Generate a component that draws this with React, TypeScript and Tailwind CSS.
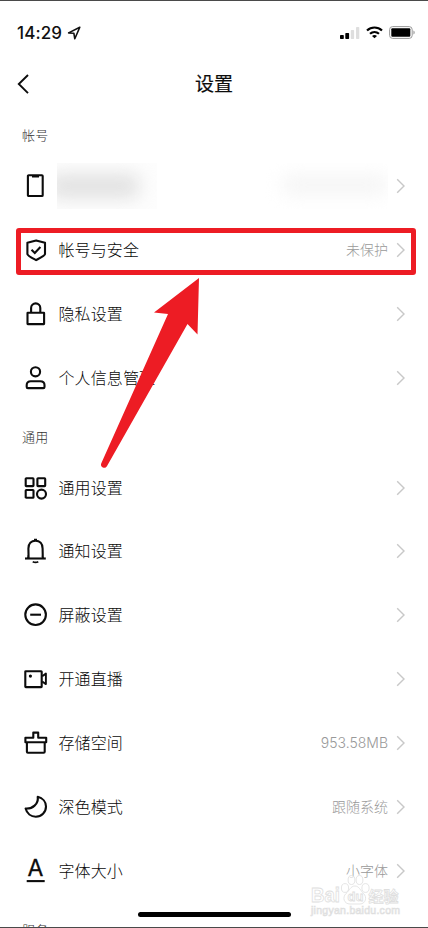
import type { ReactNode } from 'react';

type Row = {
  icon: ReactNode;
  label?: string;
  value?: string;
};

function Icon({ children }: { children: ReactNode }) {
  return (
    <svg
      className="h-6 w-6 shrink-0 overflow-visible"
      viewBox="0 0 24 24"
      fill="none"
      stroke="#0c0c0c"
      strokeWidth="2.1"
      strokeLinejoin="round"
    >
      {children}
    </svg>
  );
}

const accountRows: Row[] = [
  {
    icon: (
      <Icon>
        <rect x="3.9" y="1.3" width="14.8" height="20.7" rx="0.8" />
        <path d="M8 2.4h7" strokeWidth="2.2" />
      </Icon>
    ),
  },
  {
    icon: (
      <Icon>
        <path d="M12.100 2.400 21 4.800v11.100c0 1.900-5.500 4.400-8.900 6.200-3.400-1.800-8.700-4.300-8.700-6.200V4.800z" />
        <path d="m7.500 11.700 3.300 3.200 5.600-5.800" strokeLinejoin="miter" />
      </Icon>
    ),
    label: '帐号与安全',
    value: '未保护',
  },
  {
    icon: (
      <Icon>
        <rect x="3.5" y="10.7" width="16.6" height="11.4" rx="0.3" />
        <path d="M7.100 10.500V6a4.600 4.600 0 0 1 9.200 0v4.500" />
      </Icon>
    ),
    label: '隐私设置',
  },
  {
    icon: (
      <Icon>
        <circle cx="11.5" cy="5.8" r="4.6" />
        <path d="M6.800 15.200h9.400c2.600 0 4.300 1.500 4.300 3.700v2c0 .7-.5 1.200-1.200 1.200H3.900c-.7 0-1.200-.5-1.200-1.200v-2c0-2.200 1.500-3.700 4.100-3.700z" />
      </Icon>
    ),
    label: '个人信息管理',
  },
];

const generalRows: Row[] = [
  {
    icon: (
      <Icon>
        <rect x="1.7" y="2.3" width="7.8" height="7.8" rx="0.6" />
        <rect x="13.4" y="2.3" width="7.8" height="7.8" rx="0.6" />
        <rect x="1.7" y="14" width="7.8" height="7.8" rx="0.6" />
        <circle cx="17.5" cy="18.1" r="4.5" />
      </Icon>
    ),
    label: '通用设置',
  },
  {
    icon: (
      <Icon>
        <path d="M1 19.500h20.800" />
        <path d="M4.600 19.300 4.400 9.400c0-4.600 2.900-7.700 7.100-7.700s7.100 3.100 7.100 7.700l.2 9.900M4 19.500l.5-3M19 19.500l-.5-3" />
        <path d="M10 .6h3M8.700 22.800c1.500.7 4.100.7 5.600 0" strokeWidth="1.7" />
      </Icon>
    ),
    label: '通知设置',
  },
  {
    icon: (
      <Icon>
        <circle cx="11.6" cy="11.7" r="10.3" />
        <path d="M6.200 11.700h10.800" />
      </Icon>
    ),
    label: '屏蔽设置',
  },
  {
    icon: (
      <Icon>
        <rect x="1.3" y="4.2" width="16.4" height="15.9" rx="0.5" />
        <path d="m18.200 9.200 3.700-2.600v10.500l-3.700-2.600" strokeWidth="1.9" />
        <circle cx="6.4" cy="9.1" r="1.6" fill="#0c0c0c" stroke="none" />
      </Icon>
    ),
    label: '开通直播',
  },
  {
    icon: (
      <Icon>
        <path d="M9.300 6.800V1.600h4.900v5.200h8v4.500H1.400V6.800z" />
        <path d="M2.900 11.500v9.300c0 .6.4 1 1 1h15.800c.6 0 1-.4 1-1v-9.300" />
      </Icon>
    ),
    label: '存储空间',
    value: '953.58MB',
  },
  {
    icon: (
      <Icon>
        <path d="M13.700 1.800C18.700 3 22 7 22 11.500c0 5.700-4.500 10.200-10.200 10.200-4.800 0-8.900-3.200-10.200-8.200 6.700.6 13.200-4.400 12.100-11.700z" />
      </Icon>
    ),
    label: '深色模式',
    value: '跟随系统',
  },
  {
    icon: (
      <Icon>
        <text
          x="11.5"
          y="17"
          textAnchor="middle"
          fontFamily="Inter, sans-serif"
          fontSize="23"
          fontWeight="400"
          fill="#0c0c0c"
          stroke="#0c0c0c"
          strokeWidth="0.3"
        >
          A
        </text>
        <path d="M2.700 22.100h18" />
      </Icon>
    ),
    label: '字体大小',
    value: '小字体',
  },
];

function Chevron() {
  return (
    <svg className="h-4 w-2.5 shrink-0" viewBox="0 0 10 16" fill="none" stroke="#c8c8c8" strokeWidth="1.4">
      <path d="m1.200 1.300 6.800 6.700-6.800 6.700" />
    </svg>
  );
}

function SettingRow({ icon, label, value }: Row) {
  return (
    <li className="flex h-[63.9px] items-center pr-[22px] pl-6">
      {icon}
      {label ? (
        <span className="ml-[10.5px] pt-0.5 text-[16px] leading-6 font-light tracking-[0.1px] whitespace-nowrap text-[#080808]">
          {label}
        </span>
      ) : (
        <span className="ml-[9px] h-[46px] w-[100px] overflow-hidden bg-[#fdfdfd]">
          <span className="mt-[11px] -ml-2 block h-6 w-[90px] rounded-lg bg-[#e1e1e1] blur-[9px]" />
        </span>
      )}
      {value && (
        <span className="ml-auto font-['Inter','Noto_Sans_CJK_SC',sans-serif] text-[14px] leading-6 font-light whitespace-nowrap text-[#999]">
          {value}
        </span>
      )}
      {!label && (
        <span className="ml-auto h-[46px] w-[130px] overflow-hidden">
          <span className="mt-[12px] ml-6 block h-5 w-[106px] rounded-lg bg-[#f5f5f5] blur-[9px]" />
        </span>
      )}
      <span className={value || !label ? 'ml-2' : 'ml-auto'}>
        <Chevron />
      </span>
    </li>
  );
}

function StatusBar() {
  return (
    <div className="flex h-[61px] shrink-0 items-center pt-0.5 pr-[13px] pl-[17px]">
      <span className="pt-px font-['Inter'] text-[17px] leading-5 font-medium tracking-[0.1px] text-[#111]">14:29</span>
      <svg className="ml-[5px] h-[14px] w-[14px]" viewBox="0 0 14 14" fill="none" stroke="#111" strokeWidth="1.6">
        <path d="M12.800 1.300 1.600 6.900l5.300.4.900 5.500z" strokeLinejoin="round" />
      </svg>
      <svg className="ml-auto h-3 w-5" viewBox="0 0 20 12">
        <rect x="0" y="8" width="3.8" height="4" rx="0.7" />
        <rect x="5.3" y="6" width="3.8" height="6" rx="0.7" />
        <rect x="10.8" y="3" width="3.3" height="9" rx="0.7" fill="#dedede" />
        <rect x="16" y="0" width="3.3" height="12" rx="0.7" fill="#dedede" />
      </svg>
      <svg className="ml-1.5 h-[13px] w-[17px]" viewBox="0 0 17 13" fill="none" stroke="#000" strokeWidth="2.2">
        <path d="M1 4.500c4.300-4 10.700-4 15 0M4 7.800c2.600-2.300 6.400-2.300 9 0" />
        <path d="M8.500 12.300 6 10c1.500-1.300 3.500-1.300 5 0z" fill="#000" stroke="none" />
      </svg>
      <svg className="ml-1.5 h-[13px] w-[26px]" viewBox="0 0 26 13">
        <rect x="0.6" y="0.6" width="22.6" height="11.8" rx="3" fill="none" stroke="#999" />
        <rect x="2.3" y="2.3" width="19" height="8.4" rx="1" />
        <path d="M24.500 4.500c1.500.8 1.500 3.200 0 4z" fill="#888" />
      </svg>
    </div>
  );
}

function SectionTitle({ children }: { children: ReactNode }) {
  return (
    <h2 className="flex h-[46px] items-end pb-2 pl-[22px] text-[13px] leading-5 font-light tracking-[0.3px] text-[#333]">
      {children}
    </h2>
  );
}

function Watermark() {
  return (
    <svg
      className="absolute top-[872px] left-[308px] h-[46px] w-[96px]"
      viewBox="0 0 96 46"
      fill="#fff"
      stroke="#dedede"
      strokeWidth="0.8"
      fontFamily="'Liberation Sans', 'Noto Sans CJK SC', sans-serif"
    >
      <g fillOpacity="0.6">
        <text x="3" y="29" fontSize="20" fontWeight="700" textLength="29" lengthAdjust="spacingAndGlyphs">Bai</text>
        <ellipse cx="37" cy="15" rx="3.6" ry="4.4" />
        <ellipse cx="43.5" cy="7" rx="3.4" ry="4.5" />
        <ellipse cx="51.5" cy="7" rx="3.4" ry="4.5" />
        <ellipse cx="57.5" cy="15" rx="3.6" ry="4.4" />
        <path d="M47 13c4 0 5.500 4.500 8.500 7.500 4 3.500 2 10.500-3.500 10.500H42c-6 0-8-6.500-4-10.500 3.500-3 4.500-7.500 9-7.500z" />
        <text x="39.5" y="28" fontSize="13" fontWeight="700">du</text>
        <text x="60.5" y="28.5" fontSize="15" fontWeight="700">经验</text>
      </g>
      <text x="3" y="41" fontSize="10.5" textLength="89" fill="#fff" strokeWidth="0.7">jingyan.baidu.com</text>
    </svg>
  );
}

export default function App() {
  return (
    <div className="relative flex h-[928px] w-[428px] flex-col overflow-hidden border-y border-[#4a4a4a] bg-white font-['Liberation_Sans','Noto_Sans_CJK_SC',sans-serif]">
      <StatusBar />
      <header className="grid h-11 shrink-0 grid-cols-3 items-center">
        <svg className="ml-[17px] h-5 w-3" viewBox="0 0 12 20" fill="none" stroke="#0c0c0c" strokeWidth="1.9">
          <path d="M11 1 1.800 10l9.200 9.200" />
        </svg>
        <h1 className="pt-0.5 text-center text-[19px] leading-6 font-normal text-[#0c0c0c] [-webkit-text-stroke:0.2px_#0c0c0c]">
          设置
        </h1>
      </header>

      <main className="shrink-0 pt-0.5">
        <SectionTitle>帐号</SectionTitle>
        <ul>
          {accountRows.map((row, i) => (
            <SettingRow key={i} {...row} />
          ))}
        </ul>
        <SectionTitle>通用</SectionTitle>
        <ul>
          {generalRows.map((row) => (
            <SettingRow key={row.label} {...row} />
          ))}
        </ul>
        <SectionTitle>服务</SectionTitle>
      </main>

      <div className="absolute top-[226.5px] left-[15.7px] h-[47.5px] w-[400.5px] rounded-[3px] border-[5px] border-[#ed1c24]" />
      <svg className="absolute top-[277px] left-[100px] h-[192px] w-[102px]" viewBox="100 278 102 192" fill="#ed1c24">
        <path d="M199 278 154 312.500 168 314 101.200 463.500a3.200 3.200 0 0 0 5.700 2.800L187.500 324 197.500 334.500z" />
      </svg>
      <Watermark />
      <div className="absolute top-[911px] left-[138px] h-[5px] w-[153px] rounded-full bg-black" />
    </div>
  );
}
